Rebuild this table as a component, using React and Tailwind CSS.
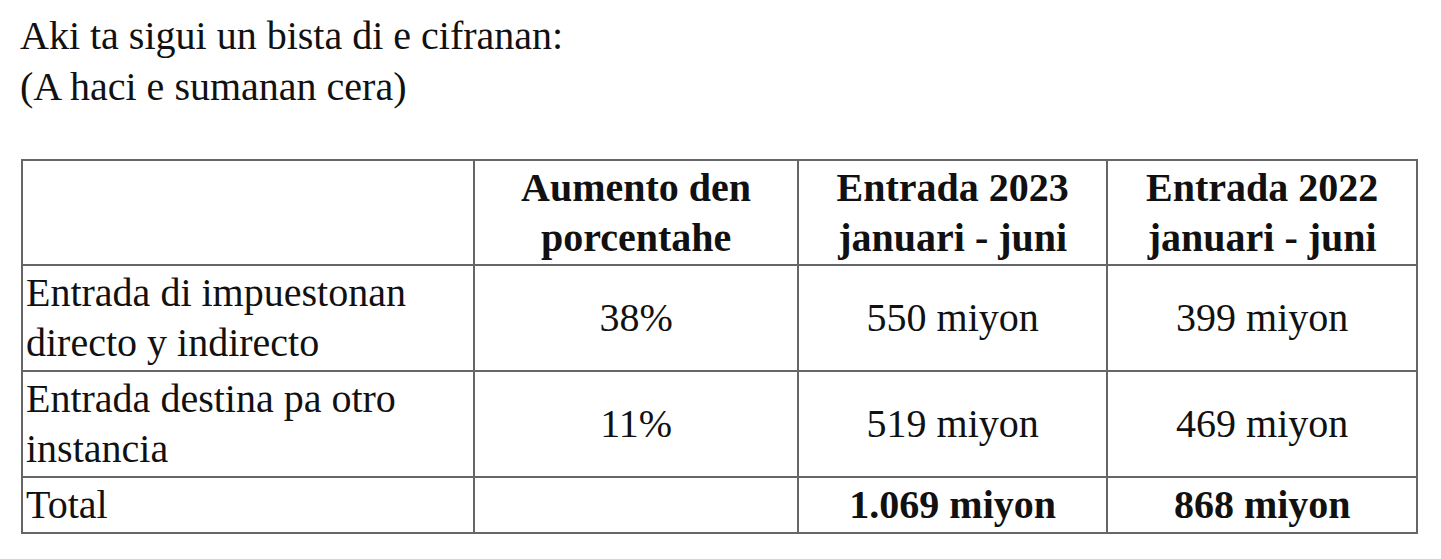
import React from "react";

const rows = [
  { label: ["Entrada di impuestonan", "directo y indirecto"], pct: "38%", y2023: "550 miyon", y2022: "399 miyon" },
  { label: ["Entrada destina pa otro", "instancia"], pct: "11%", y2023: "519 miyon", y2022: "469 miyon" },
];

const cell = "border-2 border-[#666666] align-middle";

export default function App() {
  return (
    <div className="w-[1441px] h-[559px] bg-white text-[#111111] font-['Liberation_Serif',serif] overflow-hidden">
      <div className="pl-[20px] pt-[10px] text-[40px] leading-[51px]">
        <p>Aki ta sigui un bista di e cifranan:</p>
        <p>(A haci e sumanan cera)</p>
      </div>

      <table className="ml-[21px] mt-[47px] w-[1397px] border-collapse text-[40px] leading-[50px]">
        <colgroup>
          <col className="w-[453px]" />
          <col className="w-[324px]" />
          <col className="w-[310px]" />
          <col className="w-[310px]" />
        </colgroup>
        <thead>
          <tr className="h-[105px] font-bold">
            <th className={cell}></th>
            <th className={`${cell} text-center`}>
              Aumento den
              <br />
              porcentahe
            </th>
            <th className={`${cell} text-center`}>
              Entrada 2023
              <br />
              januari - juni
            </th>
            <th className={`${cell} text-center`}>
              Entrada 2022
              <br />
              januari - juni
            </th>
          </tr>
        </thead>
        <tbody>
          {rows.map((r) => (
            <tr key={r.pct} className="h-[106px]">
              <td className={`${cell} pl-[3px] text-left`}>
                {r.label[0]}
                <br />
                {r.label[1]}
              </td>
              <td className={`${cell} text-center`}>{r.pct}</td>
              <td className={`${cell} text-center`}>{r.y2023}</td>
              <td className={`${cell} text-center`}>{r.y2022}</td>
            </tr>
          ))}
          <tr className="h-[56px]">
            <td className={`${cell} pl-[3px] text-left`}>Total</td>
            <td className={cell}></td>
            <td className={`${cell} text-center font-bold`}>1.069 miyon</td>
            <td className={`${cell} text-center font-bold`}>868 miyon</td>
          </tr>
        </tbody>
      </table>
    </div>
  );
}
